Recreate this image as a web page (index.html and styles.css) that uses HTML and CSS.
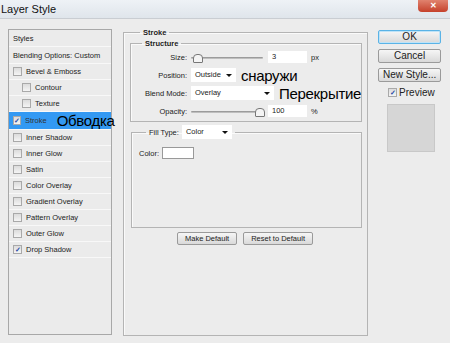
FILE: index.html
```html
<!DOCTYPE html>
<html lang="ru">
<head>
    <meta charset="UTF-8">
    <title>Layer Style</title>
    <link rel="stylesheet" href="styles.css">
</head>
<body>

    <div class="window">
        <div class="titlebar">
            <span class="title">Layer Style</span>
            <div class="close">&#x2715;</div>
        </div>

        <div class="main">
            <ul class="styles">
                <li class="head">Styles</li>
                <li class="head">Blending Options: Custom</li>
                <li><span class="cb"></span>Bevel &amp; Emboss</li>
                <li class="sub"><span class="cb"></span>Contour</li>
                <li class="sub"><span class="cb"></span>Texture</li>
                <li class="active"><span class="cb checked">&#x2713;</span>Stroke<span class="note">Обводка</span></li>
                <li><span class="cb"></span>Inner Shadow</li>
                <li><span class="cb"></span>Inner Glow</li>
                <li><span class="cb"></span>Satin</li>
                <li><span class="cb"></span>Color Overlay</li>
                <li><span class="cb"></span>Gradient Overlay</li>
                <li><span class="cb"></span>Pattern Overlay</li>
                <li><span class="cb"></span>Outer Glow</li>
                <li><span class="cb checked">&#x2713;</span>Drop Shadow</li>
            </ul>

            <fieldset class="group">
                <legend>Stroke</legend>

                <fieldset class="structure">
                    <legend>Structure</legend>
                    <div class="row">
                        <label>Size:</label>
                        <div class="slider"><span class="thumb start"></span></div>
                        <div class="field">3</div>
                        <span class="unit">px</span>
                    </div>
                    <div class="row">
                        <label>Position:</label>
                        <div class="select short">Outside<span class="arrow"></span></div>
                        <span class="note">снаружи</span>
                    </div>
                    <div class="row">
                        <label>Blend Mode:</label>
                        <div class="select wide">Overlay<span class="arrow"></span></div>
                        <span class="note">Перекрытие</span>
                    </div>
                    <div class="row">
                        <label>Opacity:</label>
                        <div class="slider"><span class="thumb end"></span></div>
                        <div class="field">100</div>
                        <span class="unit">%</span>
                    </div>
                </fieldset>

                <fieldset class="fill">
                    <legend>Fill Type: <span class="select fill-select">Color<span class="arrow"></span></span></legend>
                    <div class="color-row">Color: <span class="swatch"></span></div>
                </fieldset>

                <div class="defaults">
                    <button class="btn">Make Default</button>
                    <button class="btn">Reset to Default</button>
                </div>
            </fieldset>

            <div class="actions">
                <button class="btn big primary">OK</button>
                <button class="btn big">Cancel</button>
                <button class="btn big">New Style...</button>
                <div class="preview"><span class="cb checked">&#x2713;</span>Preview</div>
                <div class="preview-box"></div>
            </div>
        </div>
    </div>

</body>
</html>
```

FILE: styles.css
```css
body {
    margin: 0;
    font-family: "Liberation Sans", Arial, sans-serif;
    font-size: 7.5px;
    color: #222;
    background-color: #ececec;
}
.window {
    width: 450px;
    height: 343px;
    position: relative;
    overflow: hidden;
}
.titlebar {
    height: 18px;
    background: linear-gradient(#eef2f6, #dfe5eb);
    border-bottom: 1px solid #c9cdd2;
    display: flex;
    align-items: center;
}
.title {
    font-size: 11px;
    padding-left: 1px;
    color: #111;
}
.close {
    position: absolute;
    top: 0;
    right: 2px;
    width: 30px;
    height: 12px;
    border-radius: 0 0 4px 4px;
    background: linear-gradient(#e0826e, #c5412b);
    color: #fff;
    font-size: 8px;
    font-weight: bold;
    text-align: center;
    line-height: 12px;
}
.main {
    display: flex;
    align-items: flex-start;
    padding: 10px 0 0 8px;
}

/* left list */
.styles {
    list-style: none;
    margin: 0;
    padding: 0;
    width: 102px;
    height: 304px;
    border: 1px solid #a8a8a8;
    background: #ebebeb;
}
.styles li {
    height: 15px;
    border-bottom: 1px solid #f8f8f8;
    display: flex;
    align-items: center;
    padding-left: 4px;
    white-space: nowrap;
}
.styles li.head {
    padding-left: 4px;
    height: 16px;
}
.styles li.sub {
    padding-left: 13px;
}
.styles li.active {
    background: #3399f3;
    height: 17px;
    color: #333;
}
.cb {
    width: 7px;
    height: 7px;
    border: 1px solid #a9a9a9;
    background: linear-gradient(#dcdcdc, #f4f4f4);
    margin-right: 4px;
    font-size: 7px;
    line-height: 7px;
    color: #2a4ea8;
    text-align: center;
    font-weight: bold;
}
.note {
    font-size: 15px;
    color: #000;
    margin-left: 10px;
    letter-spacing: -0.3px;
}

/* stroke group */
.group {
    margin: -1px 0 0 11px;
    padding: 0 5px 0 6px;
    width: 231px;
    height: 306px;
    border: 1px solid #b4b4b4;
    box-shadow: inset 1px 1px #fafafa;
}
.group > legend {
    font-weight: bold;
    margin-left: 10px;
    padding: 0 3px;
}
.structure {
    margin: 2px 0 0 0;
    padding: 0 0 3px 0;
    height: 78px;
    border: 1px solid #b4b4b4;
    box-shadow: inset 1px 1px #fafafa;
}
.structure > legend {
    font-weight: bold;
    margin-left: 11px;
    padding: 0 3px;
}
.row {
    display: flex;
    align-items: center;
    height: 18px;
}
.row label {
    width: 56px;
    text-align: right;
    padding-right: 4px;
}
.slider {
    position: relative;
    width: 72px;
    height: 2px;
    margin-top: 2px;
    background: linear-gradient(#8a8a8a, #d0d0d0);
    border-radius: 2px;
    margin-right: 5px;
}
.thumb {
    position: absolute;
    top: -3px;
    width: 8px;
    height: 7px;
    background: #f4f4f4;
    border: 1px solid #777;
    border-radius: 4px 4px 1px 1px;
}
.thumb.start {
    left: 2px;
}
.thumb.end {
    right: -2px;
}
.field {
    width: 35px;
    height: 12px;
    background: #fff;
    line-height: 12px;
    padding-left: 4px;
}
.unit {
    margin-left: 4px;
}
.select {
    position: relative;
    background: #fff;
    height: 14px;
    line-height: 14px;
    padding-left: 4px;
    box-sizing: border-box;
}
.select.short {
    width: 45px;
}
.select.wide {
    width: 83px;
}
.row .note {
    margin-left: 5px;
}
.arrow {
    position: absolute;
    right: 4px;
    top: 6px;
    border-left: 3px solid transparent;
    border-right: 3px solid transparent;
    border-top: 3px solid #111;
}

/* fill */
.fill {
    margin: 3px 0 0 1px;
    padding: 0 7px;
    height: 101px;
    border: 1px solid #b4b4b4;
    box-shadow: inset 1px 1px #fafafa;
}
.fill > legend {
    margin-left: 7px;
    padding: 0 3px;
    display: flex;
    align-items: center;
}
.fill-select {
    display: inline-block;
    width: 50px;
    margin-left: 3px;
}
.color-row {
    display: flex;
    align-items: center;
    margin-top: 8px;
}
.swatch {
    width: 30px;
    height: 10px;
    background: #fff;
    border: 1px solid #999;
    margin-left: 3px;
}
.defaults {
    display: flex;
    gap: 6px;
    margin: 4px 0 0 47px;
}

/* buttons */
.btn {
    font-family: "Liberation Sans", Arial, sans-serif;
    font-size: 7.5px;
    height: 13px;
    padding: 0 7px;
    border: 1px solid #9a9a9a;
    border-radius: 2px;
    background: linear-gradient(#f6f6f6, #d9d9d9);
    color: #222;
    line-height: 11px;
}
.actions {
    display: flex;
    flex-direction: column;
    margin: 1px 0 0 10px;
    width: 63px;
}
.btn.big {
    width: 63px;
    height: 14px;
    font-size: 10px;
    line-height: 12px;
    margin-bottom: 5px;
    padding: 0;
}
.btn.primary {
    border-color: #5ab3e6;
    box-shadow: inset 0 0 0 1px #bfe3f7;
}
.preview {
    display: flex;
    align-items: center;
    font-size: 10px;
    margin: 0 0 0 10px;
}
.preview .cb {
    margin-right: 2px;
}
.preview-box {
    width: 46px;
    height: 46px;
    margin: 6px 0 0 9px;
    background: #d6d6d6;
    border: 1px solid #c8c8c8;
}
```
